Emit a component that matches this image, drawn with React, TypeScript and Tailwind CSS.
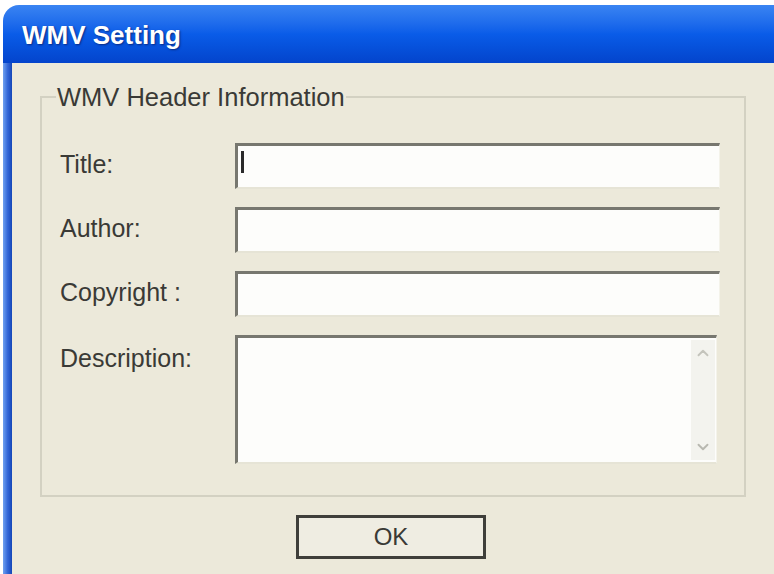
import { ChevronUp, ChevronDown } from 'lucide-react'

const font = { fontFamily: '"Liberation Sans", Arial, sans-serif' }

function Field({ label, cursor }: { label: string; cursor?: boolean }) {
  return (
    <div className="flex items-start">
      <div className="w-[175px] pt-[6px] text-[25px] leading-[30px] text-[#3a3a36]">{label}</div>
      <div className="h-[46px] w-[485px] border-t-[3px] border-l-[3px] border-r border-b-[2px] border-t-[#77776f] border-l-[#77776f] border-r-[#f4f3ea] border-b-[#e6e4d6] bg-[#fdfdfb] px-[3px] pt-[5px]">
        {cursor && <div className="h-[22px] w-[3px] bg-[#2a2a2a]" />}
      </div>
    </div>
  )
}

export default function App() {
  return (
    <div className="h-[574px] w-[774px] overflow-hidden bg-white pt-[5px] select-none" style={font}>
      <div className="ml-[3px] flex h-[569px] flex-col">
        <div className="flex h-[58px] items-center rounded-tl-[16px] bg-gradient-to-b from-[#3a84f2] via-[#0a5ce8] to-[#0444cc] pl-[19px] pt-[2px]">
          <span className="text-[26px] font-bold text-white [text-shadow:1px_1px_2px_#0b2a80]">WMV Setting</span>
        </div>
        <div className="flex flex-1">
          <div className="w-[9px] bg-gradient-to-r from-[#6fa0f0] via-[#3568d8] to-[#1446b8]" />
          <div className="flex-1 bg-[#ece9da]">
            <fieldset className="ml-[28px] mt-[20px] w-[706px] border-2 border-[#d3d1c2] px-[18px] pb-[31px] pt-[32px]">
              <legend className="ml-[-4px] px-[1px] text-[25.5px] leading-[28px] text-[#3a3a36]">WMV Header Information</legend>
              <div className="flex flex-col gap-[18px]">
                <Field label="Title:" cursor />
                <Field label="Author:" />
                <Field label="Copyright :" />
                <div className="flex items-start">
                  <div className="w-[175px] pt-[8px] text-[25px] leading-[30px] text-[#3a3a36]">Description:</div>
                  <div className="flex h-[129px] w-[482px] border-t-[3px] border-l-[3px] border-r border-b-[2px] border-t-[#77776f] border-l-[#77776f] border-r-[#f4f3ea] border-b-[#e6e4d6] bg-[#fdfdfb]">
                    <div className="flex-1" />
                    <div className="my-[2px] mr-[1px] flex w-[24px] flex-col items-center justify-between bg-[#f3f3ee] py-[4px]">
                      <ChevronUp size={18} strokeWidth={2.5} className="text-[#c4c4bc]" />
                      <ChevronDown size={18} strokeWidth={2.5} className="text-[#b8b8b0]" />
                    </div>
                  </div>
                </div>
              </div>
            </fieldset>
            <div className="flex justify-center pt-[18px] pr-[4px]">
              <div className="flex h-[44px] w-[190px] items-center justify-center border-[3px] border-[#3f3f3a] bg-[#efede2] text-[24px] text-[#3a3a36]">
                OK
              </div>
            </div>
          </div>
        </div>
      </div>
    </div>
  )
}
